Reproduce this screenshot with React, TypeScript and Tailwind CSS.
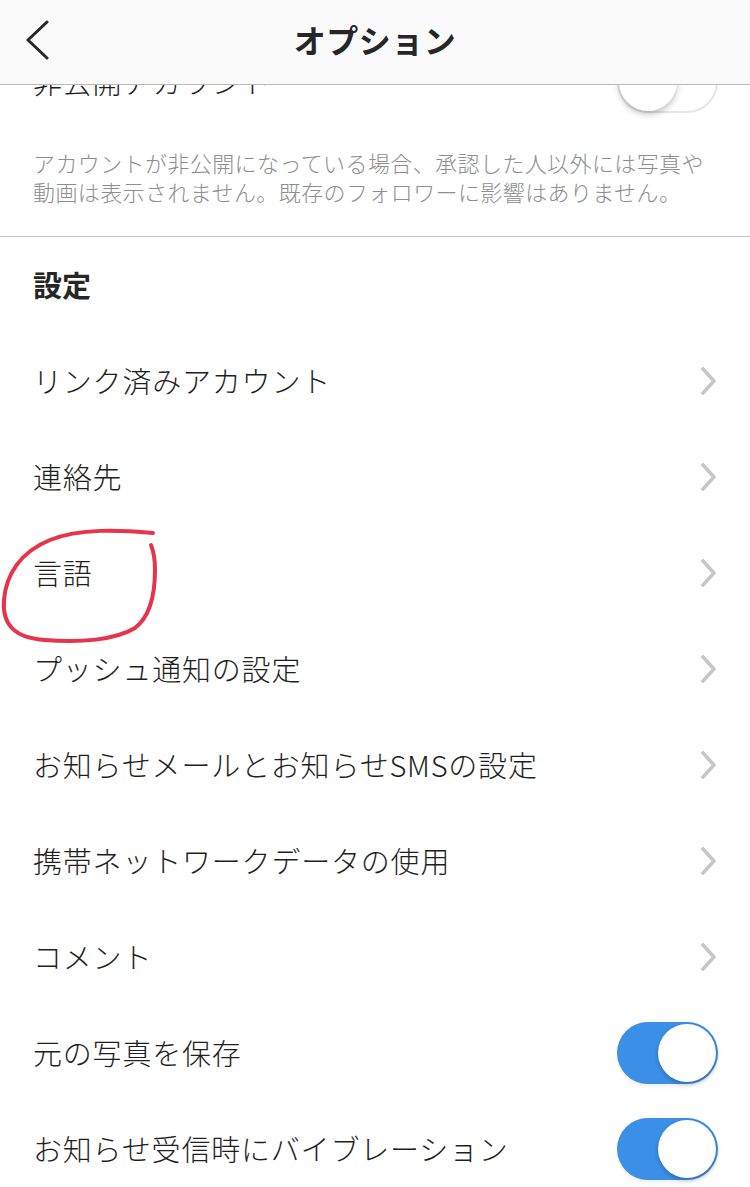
import React from "react";

const font = { fontFamily: '"Noto Sans CJK JP", "Noto Sans", sans-serif' };

function Chevron() {
  return (
    <svg width="18" height="28" viewBox="0 0 18 28" className="shrink-0">
      <path d="M3 2 L14 14 L3 26" fill="none" stroke="#c7c7c7" strokeWidth="3.5" strokeLinecap="square" />
    </svg>
  );
}

function Toggle({ on }: { on: boolean }) {
  if (on) {
    return (
      <div className="w-[101px] h-[62px] rounded-full bg-[#3b8fe6] flex items-center justify-end pr-[2px] shadow-[0_2px_4px_rgba(0,0,0,0.08)]">
        <div className="w-[58px] h-[58px] rounded-full bg-white shadow-[0_2px_4px_rgba(0,0,0,0.25)]" />
      </div>
    );
  }
  return (
    <div className="w-[101px] h-[62px] rounded-full bg-white border-2 border-[#e6e6e6] flex items-center justify-start">
      <div className="w-[58px] h-[58px] rounded-full bg-white shadow-[0_3px_6px_rgba(0,0,0,0.25)]" />
    </div>
  );
}

function Row({ label, toggle }: { label: string; toggle?: boolean }) {
  return (
    <div className="h-[96px] flex items-center justify-between pl-[33px] pr-[32px]">
      <span className="text-[29px] font-light text-[#1f1f1f] tracking-[0.8px]">{label}</span>
      {toggle === undefined ? <Chevron /> : <Toggle on={toggle} />}
    </div>
  );
}

export default function App() {
  return (
    <div className="relative w-[750px] h-[1187px] overflow-hidden bg-white" style={font}>
      <header className="relative z-10 h-[85px] bg-[#fafafa] border-b border-[#b9b9b9] flex items-center justify-center">
        <svg width="30" height="40" viewBox="0 0 30 40" className="absolute left-[22px] top-[20px]">
          <path d="M25 2 L6 20 L25 38" fill="none" stroke="#262626" strokeWidth="3" strokeLinecap="round" strokeLinejoin="round" />
        </svg>
        <span className="text-[32px] font-bold text-[#262626] tracking-[0.5px] -mt-[6px]">オプション</span>
      </header>

      <div className="-mt-[51px]">
        <div className="h-[96px] flex items-center justify-between pl-[33px] pr-[32px]">
          <span className="text-[29px] font-light text-[#1f1f1f] tracking-[0.8px]">非公開アカウント</span>
          <Toggle on={false} />
        </div>
        <div className="pl-[33px] pr-[30px] pt-[18px] pb-[30px] text-[22px] font-light leading-[29px] text-[#8e8e8e] tracking-[0.4px]">
          アカウントが非公開になっている場合、承認した人以外には写真や動画は表示されません。既存のフォロワーに影響はありません。
        </div>
        <div className="h-px bg-[#c8c8c8]" />
        <div className="h-[96px] flex items-center pl-[33px]">
          <span className="text-[29px] font-bold text-[#262626]">設定</span>
        </div>
        <Row label="リンク済みアカウント" />
        <Row label="連絡先" />
        <Row label="言語" />
        <Row label="プッシュ通知の設定" />
        <Row label="お知らせメールとお知らせSMSの設定" />
        <Row label="携帯ネットワークデータの使用" />
        <Row label="コメント" />
        <Row label="元の写真を保存" toggle={true} />
        <Row label="お知らせ受信時にバイブレーション" toggle={true} />
      </div>

      <svg className="absolute left-0 top-0 pointer-events-none" width="750" height="1187" viewBox="0 0 750 1187">
        <path
          d="M153 533 C 120 530, 80 528, 50 540 C 20 552, 6 575, 4 600 C 2 625, 15 638, 45 640 C 80 643, 115 640, 135 628 C 152 615, 155 590, 155 570 C 155 558, 153 550, 151 545"
          fill="none"
          stroke="#e8344a"
          strokeWidth="4"
          strokeLinecap="round"
        />
      </svg>
    </div>
  );
}
